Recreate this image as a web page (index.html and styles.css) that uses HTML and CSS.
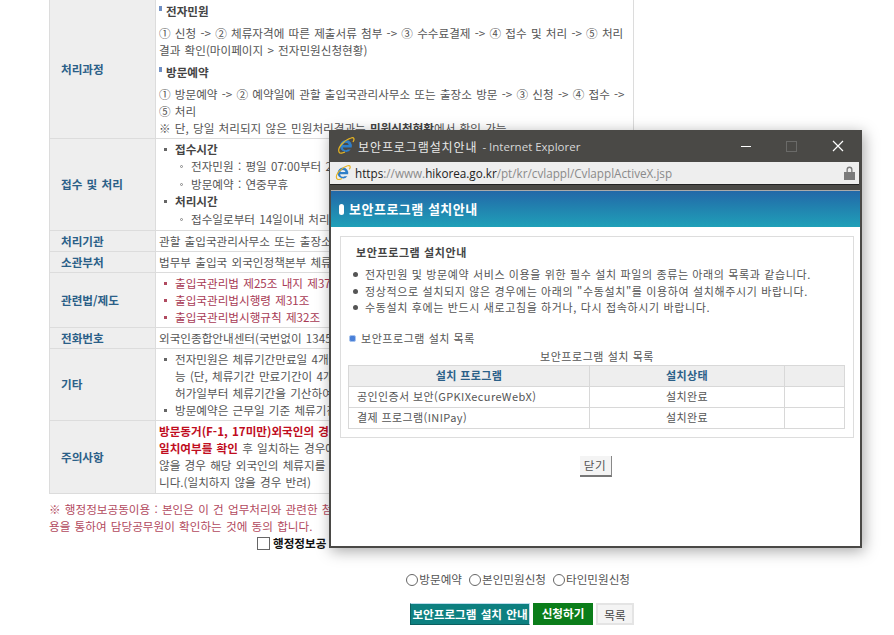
FILE: index.html
```html
<!DOCTYPE html>
<html lang="ko">
<head>
    <meta charset="utf-8">
    <title>보안프로그램 설치안내</title>
    <link rel="stylesheet" href="styles.css">
</head>
<body>
    <div class="page">
        <table class="info">
            <tr class="row-process">
                <th>처리과정</th>
                <td>
                    <h4 class="sub"><span class="tick"></span>전자민원</h4>
                    <p class="step">① 신청 -&gt; ② 체류자격에 따른 제출서류 첨부 -&gt; ③ 수수료결제 -&gt; ④ 접수 및 처리 -&gt; ⑤ 처리<br>결과 확인(마이페이지 &gt; 전자민원신청현황)</p>
                    <h4 class="sub"><span class="tick"></span>방문예약</h4>
                    <p class="step">① 방문예약 -&gt; ② 예약일에 관할 출입국관리사무소 또는 출장소 방문 -&gt; ③ 신청 -&gt; ④ 접수 -&gt;<br>⑤ 처리<br>※ 단, 당일 처리되지 않은 민원처리결과는 <b>민원신청현황</b>에서 확인 가능</p>
                </td>
            </tr>
            <tr class="row-time">
                <th>접수 및 처리</th>
                <td>
                    <ul class="list">
                        <li><b>접수시간</b>
                            <ul class="inner">
                                <li>전자민원 : 평일 07:00부터 22:00</li>
                                <li>방문예약 : 연중무휴</li>
                            </ul>
                        </li>
                        <li><b>처리시간</b>
                            <ul class="inner">
                                <li>접수일로부터 14일이내 처리</li>
                            </ul>
                        </li>
                    </ul>
                </td>
            </tr>
            <tr class="row-one">
                <th>처리기관</th>
                <td>관할 출입국관리사무소 또는 출장소</td>
            </tr>
            <tr class="row-one">
                <th>소관부처</th>
                <td>법무부 출입국 외국인정책본부 체류</td>
            </tr>
            <tr class="row-law">
                <th>관련법/제도</th>
                <td>
                    <ul class="list law">
                        <li>출입국관리법 제25조 내지 제37조</li>
                        <li>출입국관리법시행령 제31조</li>
                        <li>출입국관리법시행규칙 제32조</li>
                    </ul>
                </td>
            </tr>
            <tr class="row-one">
                <th>전화번호</th>
                <td>외국인종합안내센터(국번없이 1345)</td>
            </tr>
            <tr class="row-etc">
                <th>기타</th>
                <td>
                    <ul class="list">
                        <li>전자민원은 체류기간만료일 4개월<br>능 (단, 체류기간 만료기간이 4개월<br>허가일부터 체류기간을 기산하여</li>
                        <li>방문예약은 근무일 기준 체류기간</li>
                    </ul>
                </td>
            </tr>
            <tr class="row-note">
                <th>주의사항</th>
                <td>
                    <b class="alert">방문동거(F-1, 17미만)외국인의 경우</b><br>
                    <b class="alert">일치여부를 확인</b> 후 일치하는 경우에<br>
                    않을 경우 해당 외국인의 체류지를<br>
                    니다.(일치하지 않을 경우 반려)
                </td>
            </tr>
        </table>

        <p class="notice">※ 행정정보공동이용 : 본인은 이 건 업무처리와 관련한 첨부<br>용을 통하여 담당공무원이 확인하는 것에 동의 합니다.</p>
        <div class="agree"><span class="checkbox"></span><b>행정정보공</b></div>

        <div class="radios">
            <span class="radio"></span><span class="radio-text">방문예약</span>
            <span class="radio"></span><span class="radio-text">본인민원신청</span>
            <span class="radio"></span><span class="radio-text">타인민원신청</span>
        </div>
        <div class="actions">
            <span class="btn btn-teal">보안프로그램 설치 안내</span>
            <span class="btn btn-green">신청하기</span>
            <span class="btn btn-grey">목록</span>
        </div>
    </div>

    <div class="popup">
        <div class="titlebar">
            <svg class="ie" width="20" height="20" viewBox="0 0 20 20"><path d="M10 4a6 6 0 0 0-6 6 6 6 0 0 0 10.800 3.500h-3a3 3 0 0 1-5-2h8.900a6 6 0 0 0-5.700-7.500zM7 9a3 3 0 0 1 5.800 0z" fill="#2f7fc8"/><path d="M3 16C1 12 8 4 15 2c3-1 4 1 2 4M3 16c1 2 4 1 6 0" fill="none" stroke="#e6b422" stroke-width="1.300"/></svg>
            <span class="title-ko">보안프로그램설치안내</span>
            <span class="title-en">- Internet Explorer</span>
            <div class="win-buttons">
                <span class="win-min"></span>
                <span class="win-max"></span>
                <svg class="win-close" width="12" height="12" viewBox="0 0 12 12"><path d="M1 1l10 10M11 1L1 11" stroke="#fff" stroke-width="1.200"/></svg>
            </div>
        </div>
        <div class="addressbar">
            <svg class="ie-small" width="18" height="18" viewBox="0 0 20 20"><path d="M10 4a6 6 0 0 0-6 6 6 6 0 0 0 10.800 3.500h-3a3 3 0 0 1-5-2h8.900a6 6 0 0 0-5.700-7.500zM7 9a3 3 0 0 1 5.800 0z" fill="#2f7fc8"/><path d="M3 16C1 12 8 4 15 2c3-1 4 1 2 4M3 16c1 2 4 1 6 0" fill="none" stroke="#e6b422" stroke-width="1.300"/></svg>
            <span class="url"><span class="url-dark">https</span>://www.<span class="url-dark">hikorea.go.kr</span>/pt/kr/cvlappl/CvlapplActiveX.jsp</span>
            <svg class="lock" width="11" height="14" viewBox="0 0 11 14"><path d="M0 6h11v8H0zM2.500 6V3.500a3 3 0 0 1 6 0V6" fill="#7a7a7a"/><path d="M3.800 6V3.600a1.700 1.700 0 0 1 3.400 0V6z" fill="#eee"/></svg>
        </div>
        <div class="popup-body">
            <div class="banner"><span class="banner-pill"></span>보안프로그램 설치안내</div>
            <div class="panel">
                <h3 class="panel-title">보안프로그램 설치안내</h3>
                <ul class="dots">
                    <li>전자민원 및 방문예약 서비스 이용을 위한 필수 설치 파일의 종류는 아래의 목록과 같습니다.</li>
                    <li>정상적으로 설치되지 않은 경우에는 아래의 "수동설치"를 이용하여 설치해주시기 바랍니다.</li>
                    <li>수동설치 후에는 반드시 새로고침을 하거나, 다시 접속하시기 바랍니다.</li>
                </ul>
                <div class="list-head"><span class="list-icon"></span>보안프로그램 설치 목록</div>
                <div class="caption">보안프로그램 설치 목록</div>
                <table class="programs">
                    <tr>
                        <th class="col-name">설치 프로그램</th>
                        <th class="col-state">설치상태</th>
                        <th></th>
                    </tr>
                    <tr>
                        <td>공인인증서 보안(GPKIXecureWebX)</td>
                        <td class="center">설치완료</td>
                        <td></td>
                    </tr>
                    <tr>
                        <td>결제 프로그램(INIPay)</td>
                        <td class="center">설치완료</td>
                        <td></td>
                    </tr>
                </table>
            </div>
            <div class="close-wrap"><span class="close-btn">닫기</span></div>
        </div>
    </div>
</body>
</html>
```

FILE: styles.css
```css
html, body {
    margin: 0;
    height: 635px;
    overflow: hidden;
    background: #fff;
}
body {
    font-family: "Noto Sans CJK KR", "Noto Sans", sans-serif;
    font-size: 11.600px;
    word-spacing: 1px;
    line-height: 17px;
    color: #555;
    position: relative;
}
.page {
    width: 585px;
    margin-left: 49px;
}

/* main table */
.info {
    width: 585px;
    border-collapse: collapse;
    table-layout: fixed;
}
.info th, .info td {
    border: 1px solid #dcdcdc;
    border-top-color: #d8d8d8;
    padding: 0 3px;
}
.info th {
    width: 90px;
    background: #eee;
    color: #2b6088;
    font-weight: bold;
    text-align: left;
    padding-left: 11px;
    padding-right: 4px;
}
.info tr:first-child th, .info tr:first-child td { border-top: none; }
.row-process td { height: 138px; vertical-align: top; }
.row-time td { height: 91px; }
.row-one td { height: 20px; }
.row-law td { height: 54px; }
.row-etc td { height: 71px; }
.row-note td { height: 72px; }

.sub {
    margin: 3px 0 5px;
    font-size: 11.600px;
    line-height: 17px;
    color: #444;
}
.tick {
    display: inline-block;
    width: 3px;
    height: 5px;
    background: #6f8fc4;
    margin-right: 4px;
    vertical-align: 5px;
}
.step { margin: 0 0 5px; }
.step:last-child { margin-bottom: 0; }
.step b { color: #444; }

.list { margin: 0; padding: 0 0 0 16px; list-style: none; }
.list > li { position: relative; }
.list > li::before {
    content: "";
    position: absolute;
    left: -11px;
    top: 7px;
    width: 3px;
    height: 3px;
    background: #666;
}
.list b { color: #444; }
.row-time .list { line-height: 17.500px; }
.inner { margin: 0; padding: 0 0 0 16px; list-style: none; }
.inner li { position: relative; }
.inner li::before {
    content: "";
    position: absolute;
    left: -11px;
    top: 7px;
    width: 3px;
    height: 3px;
    border: 1px solid #888;
    border-radius: 50%;
    box-sizing: border-box;
}
.law li { color: #a83a54; }
.law > li::before { background: #b04a60; }
.alert { color: #c00d1e; }

.notice {
    margin: 7px 0 0;
    color: #b24a5e;
}
.agree {
    display: flex;
    align-items: center;
    gap: 3px;
    margin: 0 0 0 208px;
    color: #111;
}
.checkbox {
    width: 11px;
    height: 11px;
    border: 1px solid #666;
    background: #fff;
}
.radios {
    display: flex;
    justify-content: flex-end;
    align-items: center;
    margin: 19px 4px 0 0;
}
.radio {
    width: 10px;
    height: 10px;
    border: 1px solid #666;
    border-radius: 50%;
    margin-right: 1px;
}
.radio-text { margin-right: 7px; }
.radio-text:last-child { margin-right: 0; }
.actions {
    display: flex;
    justify-content: flex-end;
    gap: 3px;
    margin-top: 15px;
}
.btn {
    height: 22px;
    line-height: 20px;
    box-sizing: border-box;
    text-align: center;
    font-weight: bold;
}
.btn-teal {
    width: 120px;
    background: #0d8080;
    color: #fff;
    border: 1px solid #0b5f5f;
    border-right-color: #bde;
    border-top-color: #bde;
}
.btn-green {
    width: 60px;
    background: #0b7d1a;
    color: #fff;
}
.btn-grey {
    width: 38px;
    background: #f4f4f4;
    color: #444;
    border: 2px solid #e4e4e4;
    font-weight: normal;
}

/* popup window */
.popup {
    position: absolute;
    left: 329px;
    top: 130px;
    width: 533px;
    height: 418px;
    box-sizing: border-box;
    background: #4a4946;
    box-shadow: 2px 3px 14px rgba(0, 0, 0, 0.35);
    display: flex;
    flex-direction: column;
    word-spacing: 0;
}
.titlebar {
    height: 32px;
    display: flex;
    align-items: center;
    padding-left: 7px;
    color: #e8e8e8;
    flex: none;
    font-size: 12px;
}
.ie { margin-right: 2px; flex: none; }
.title-ko { letter-spacing: 0.9px; margin-right: 5px; }
.title-en { font-family: "Open Sans", sans-serif; font-size: 11.500px; color: #d8d8d8; }
.win-buttons {
    margin-left: auto;
    display: flex;
    align-items: center;
    height: 100%;
    padding-right: 18px;
    flex: none;
}
.win-min { width: 10px; height: 1px; background: #fff; }
.win-max { width: 9px; height: 9px; border: 1px solid #6a6a68; margin-left: 35px; }
.win-close { margin-left: 35px; }
.addressbar {
    height: 23px;
    margin: 0 3px 0 1px;
    background: #eee;
    border-bottom: 1px solid #222;
    display: flex;
    align-items: center;
    padding: 0 4px;
    box-sizing: border-box;
    flex: none;
}
.ie-small { margin-right: 3px; flex: none; }
.url {
    font-family: "Open Sans", sans-serif;
    font-size: 11.700px;
    color: #8a8a8a;
}
.url-dark { color: #222; }
.lock { margin-left: auto; }
.popup-body {
    flex: 1;
    margin: 5px 2px 2px 2px;
    background: #fff;
    border-top: 1px solid #aaa;
    display: flex;
    flex-direction: column;
}
.banner {
    height: 36px;
    flex: none;
    background: linear-gradient(#2268a8, #20a0b8);
    color: #fff;
    font-weight: bold;
    font-size: 13px;
    line-height: 36px;
    letter-spacing: 0.5px;
    padding-left: 8px;
    display: flex;
    align-items: center;
    gap: 5px;
}
.banner-pill {
    width: 5px;
    height: 11px;
    border-radius: 3px;
    background: #fff;
}
.panel {
    margin: 9px 6px 0 9px;
    height: 202px;
    box-sizing: border-box;
    border: 1px solid #ddd;
    padding: 7px 7px 0 7px;
}
.panel-title {
    margin: 0 0 5px 8px;
    font-size: 11px;
    line-height: 17px;
    color: #444;
    letter-spacing: 0.6px;
}
.dots {
    margin: 0;
    padding: 0 0 0 17px;
    list-style: none;
    font-size: 11px;
    line-height: 16.500px;
    letter-spacing: 0.63px;
}
.dots li { position: relative; }
.dots li::before {
    content: "";
    position: absolute;
    left: -12px;
    top: 6px;
    width: 5px;
    height: 5px;
    border-radius: 50%;
    background: #555;
}
.list-head {
    margin-top: 14px;
    padding-left: 1px;
    display: flex;
    align-items: center;
    gap: 5px;
    font-size: 11px;
    letter-spacing: 0.55px;
}
.list-icon {
    width: 5px;
    height: 5px;
    border-radius: 2px;
    background: #4a80d8;
    border: 1px solid #a8c4ee;
}
.caption {
    margin-top: 1px;
    text-align: center;
    font-size: 11px;
    line-height: 17px;
    letter-spacing: 0.55px;
}
.programs {
    width: 497px;
    border-collapse: collapse;
    table-layout: fixed;
    font-size: 11px;
    letter-spacing: 0.4px;
}
.programs th, .programs td {
    border: 1px solid #d8d8d8;
    height: 20px;
    padding: 0 8px;
}
.programs th { background: #eee; color: #2b6088; }
.col-name { width: 224px; }
.col-state { width: 178px; }
.center { text-align: center; }
.close-wrap { text-align: center; margin-top: 18px; }
.close-btn {
    display: inline-block;
    width: 32px;
    height: 21px;
    box-sizing: border-box;
    background: #f4f4f4;
    border-right: 1px solid #888;
    border-bottom: 2px solid #777;
    line-height: 19px;
    letter-spacing: 0.6px;
}
```
